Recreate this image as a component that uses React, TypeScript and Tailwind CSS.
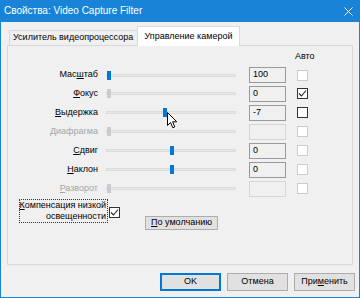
import React from "react";

const font = { fontFamily: '"Liberation Sans", Arial, sans-serif' };

function Check() {
  return (
    <svg width="9" height="9" viewBox="0 0 9 9" className="block">
      <polyline points="1,4.5 3.5,7 8,1.5" fill="none" stroke="#222" strokeWidth="1.1" />
    </svg>
  );
}

function CheckBox({ checked, disabled }: { checked?: boolean; disabled?: boolean }) {
  return (
    <div
      className={
        "w-[11px] h-[11px] flex items-center justify-center border " +
        (disabled ? "border-[#cccccc] bg-[#ffffff]" : "border-[#333333] bg-white")
      }
    >
      {checked ? <Check /> : null}
    </div>
  );
}

type Row = {
  label: React.ReactNode;
  disabled?: boolean;
  thumbDisabled?: boolean;
  thumb: number;
  value: string;
  auto?: boolean;
  autoDisabled?: boolean;
  boxDisabled?: boolean;
  h: string;
};

const rows: Row[] = [
  { label: <>Мас<u>ш</u>таб</>, thumb: 1, value: "100", autoDisabled: true, h: "h-[18px]" },
  { label: <><u>Ф</u>окус</>, thumb: 1, value: "0", auto: true, thumbDisabled: true, h: "h-[19px]" },
  { label: <><u>В</u>ыдержка</>, thumb: 57, value: "-7", h: "h-[19px]" },
  { label: <>Диафрагма</>, thumb: 1, value: "", disabled: true, thumbDisabled: true, boxDisabled: true, autoDisabled: true, h: "h-[19px]" },
  { label: <><u>С</u>двиг</>, thumb: 64, value: "0", autoDisabled: true, h: "h-[19px]" },
  { label: <><u>Н</u>аклон</>, thumb: 64, value: "0", autoDisabled: true, h: "h-[19px]" },
  { label: <><u>Р</u>азворот</>, thumb: 1, value: "", disabled: true, thumbDisabled: true, boxDisabled: true, autoDisabled: true, h: "h-[19px]" },
];

function Slider({ thumb, disabled }: { thumb: number; disabled?: boolean }) {
  return (
    <div className="relative w-[130px] h-[11px] flex items-center">
      <div className="w-full h-[3px] bg-[#e7e7e7] border border-[#dcdcdc]" />
      <div
        className={"absolute top-[1px] w-[4px] h-[9px] " + (disabled ? "bg-[#cccccc]" : "bg-[#0078d7]")}
        style={{ left: thumb }}
      />
    </div>
  );
}

function Btn({ children, w, def }: { children: React.ReactNode; w: string; def?: boolean }) {
  return (
    <div
      className={
        w +
        " h-[18px] flex items-center justify-center text-[9px] text-black bg-[#e1e1e1] " +
        (def ? "border-2 border-[#0078d7]" : "border border-[#adadad]")
      }
    >
      {children}
    </div>
  );
}

export default function App() {
  return (
    <div
      className="w-[360px] h-[298px] flex flex-col bg-[#f0f0f0] border-x border-b border-[#1883d7] overflow-hidden"
      style={font}
    >
      {/* Title bar */}
      <div className="h-[22px] shrink-0 bg-[#1883d7] flex items-center -mx-px pl-[4px] pr-[7px]">
        <span className="text-white text-[10px] leading-none">Свойства: Video Capture Filter</span>
        <div className="ml-auto">
          <svg width="9" height="9" viewBox="0 0 9 9" className="block">
            <path d="M0.5,0.5 L8.5,8.5 M8.5,0.5 L0.5,8.5" stroke="#ffffff" strokeWidth="1" />
          </svg>
        </div>
      </div>

      {/* Body */}
      <div className="flex flex-col pl-[6px] pt-[4px]">
        {/* Tabs */}
        <div className="flex items-end h-[19px] w-[346px]">
          <div className="ml-[2px] w-[128px] h-[15px] border-t border-l border-[#d9d9d9] bg-[#f0f0f0] flex items-center pl-[3px] text-[9px] text-black whitespace-nowrap">
            Усилитель видеопроцессора
          </div>
          <div className="relative z-10 -mb-px w-[103px] h-[20px] border-t border-x border-[#d9d9d9] bg-white flex items-center justify-center text-[9px] text-black whitespace-nowrap">
            Управление камерой
          </div>
        </div>

        {/* Panel */}
        <div className="w-[346px] h-[220px] border border-[#d9d9d9] bg-[#f0f0f0] flex flex-col pt-[4px]">
          <div className="h-[14px] flex items-center">
            <span className="ml-[287px] text-[9px] text-black">Авто</span>
          </div>
          <div className="mt-[2px] flex flex-col">
            {rows.map((r, i) => (
              <div key={i} className={r.h + " flex items-center"}>
                <div
                  className={
                    "w-[90px] text-right text-[9px] whitespace-nowrap " +
                    (r.disabled ? "text-[#a6a6a6]" : "text-black")
                  }
                >
                  {r.label}
                </div>
                <div className="ml-[8px]">
                  <Slider thumb={r.thumb} disabled={r.thumbDisabled} />
                </div>
                <div
                  className={
                    "ml-[13px] w-[37px] h-[16px] flex items-center pl-[3px] text-[9px] text-black border " +
                    (r.boxDisabled ? "border-[#d6d6d6] bg-[#f0f0f0]" : "border-[#9a9a9a] bg-[#f0f0f0]")
                  }
                >
                  {r.value}
                </div>
                <div className="ml-[11px]">
                  <CheckBox checked={r.auto} disabled={r.autoDisabled} />
                </div>
              </div>
            ))}
          </div>

          {/* Compensation row */}
          <div className="mt-px flex items-start">
            <div className="ml-[11px] w-[89px] h-[24px] border border-dotted border-[#333333] flex flex-col items-end justify-center pr-[1px] text-[9px] leading-[11px] text-black whitespace-nowrap">
              <span>
                <u>К</u>омпенсация низкой
              </span>
              <span>освещенности</span>
            </div>
            <div className="ml-px mt-[8px]">
              <CheckBox checked />
            </div>
            <div className="ml-[25px] mt-[17px] w-[73px] h-[14px] border border-[#adadad] bg-[#e1e1e1] flex items-center justify-center text-[9px] text-black whitespace-nowrap">
              <span>
                <u>П</u>о умолчанию
              </span>
            </div>
          </div>
        </div>
      </div>

      {/* Bottom buttons */}
      <div className="mt-[8px] flex justify-end gap-[6px] pr-[4px]">
        <Btn w="w-[61px]" def>
          OK
        </Btn>
        <Btn w="w-[61px]">Отмена</Btn>
        <Btn w="w-[61px]">
          <span>
            При<u>м</u>енить
          </span>
        </Btn>
      </div>

      {/* Mouse cursor over slider */}
      <svg
        width="11"
        height="17"
        viewBox="0 0 11 17"
        className="absolute left-[167px] top-[112px]"
      >
        <path
          d="M0.5,0.5 L0.5,13.5 L3.5,10.5 L5.8,15.8 L7.8,14.9 L5.6,9.8 L9.8,9.8 Z"
          fill="#ffffff"
          stroke="#000000"
          strokeWidth="1"
          strokeLinejoin="miter"
        />
      </svg>
    </div>
  );
}
